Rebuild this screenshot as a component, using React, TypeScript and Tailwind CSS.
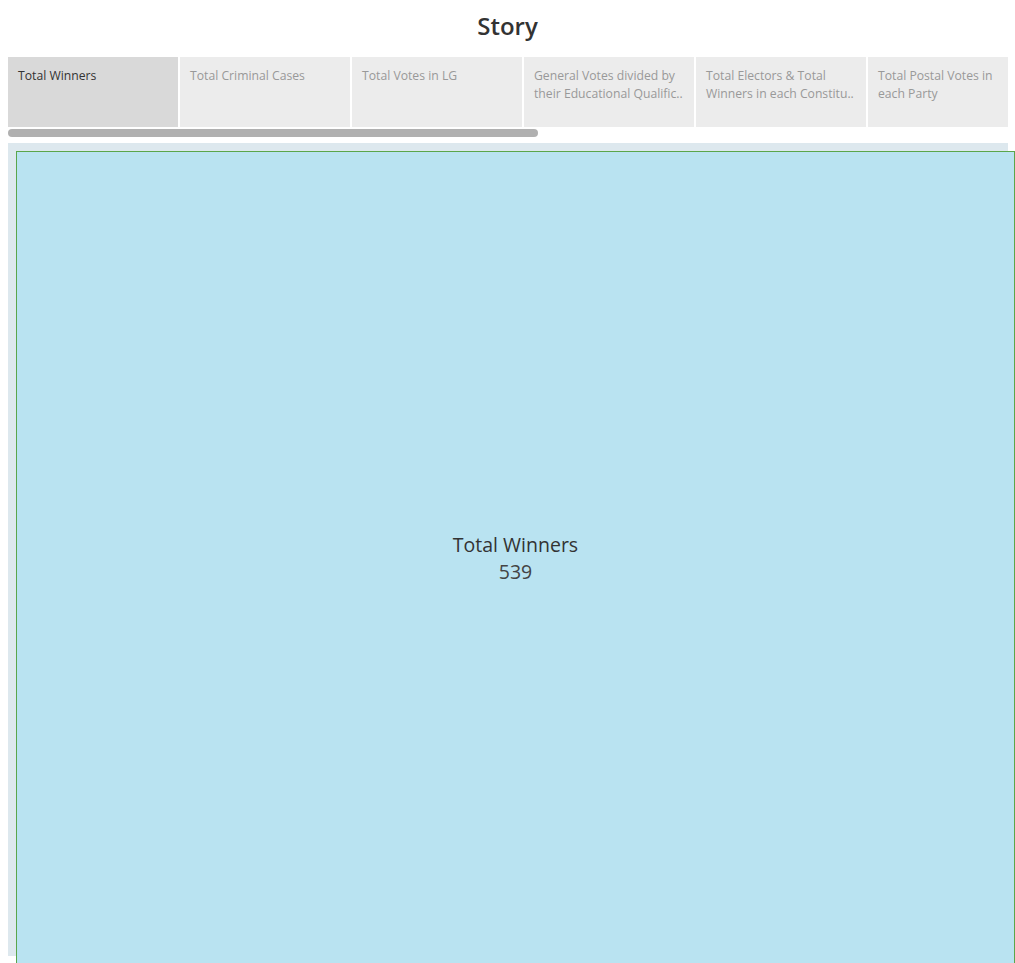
import React from "react";

const tabs = [
  { label: "Total Winners", active: true, w: "w-[170px]" },
  { label: "Total Criminal Cases", w: "w-[170px]" },
  { label: "Total Votes in LG", w: "w-[170px]" },
  { label: "General Votes divided by their Educational Qualific..", w: "w-[170px]" },
  { label: "Total Electors & Total Winners in each Constitu..", w: "w-[170px]" },
  { label: "Total Postal Votes in each Party", w: "w-[140px]" },
];

export default function App() {
  return (
    <div
      className="w-[1015px] h-[963px] overflow-hidden bg-white relative"
      style={{ fontFamily: '"Open Sans", "Noto Sans", sans-serif' }}
    >
      <div className="h-[57px] flex items-center justify-center pb-[5px]">
        <h1 className="text-[24px] font-semibold text-[#333333] leading-none">Story</h1>
      </div>
      <div className="ml-[8px] flex gap-[2px] h-[70px]">
        {tabs.map((t) => (
          <div
            key={t.label}
            className={`${t.w} shrink-0 h-full pl-[10px] pr-[6px] pt-[10px] text-[12.2px] leading-[18px] ${
              t.active ? "bg-[#d9d9d9] text-[#333333]" : "bg-[#ececec] text-[#999999]"
            }`}
          >
            {t.label}
          </div>
        ))}
      </div>
      <div className="ml-[8px] mt-[2px] h-[8px] w-[530px] rounded-full bg-[#b0b0b0]" />
      <div className="ml-[8px] mt-[6px] w-[1000px] h-[813px] bg-[#dde8ee] pt-[8px] pl-[8px]">
        <div className="w-[999px] h-[830px] bg-[#b9e3f1] border border-[#5aa64b] flex flex-col items-center justify-center pb-[16px]">
          <div className="text-[19.5px] leading-[27px] text-[#333333]">Total Winners</div>
          <div className="text-[19.5px] leading-[27px] text-[#444444]">539</div>
        </div>
      </div>
    </div>
  );
}
